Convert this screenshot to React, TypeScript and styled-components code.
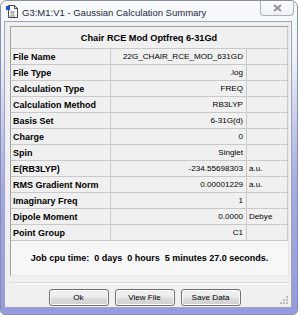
import { Fragment } from 'react'
import styled, { createGlobalStyle } from 'styled-components'

const GlobalStyle = createGlobalStyle`
  html, body {
    margin: 0;
    padding: 0;
    background: #ffffff;
  }
  body {
    font-family: 'Liberation Sans', Arial, sans-serif;
    color: #000;
  }
`

const Window = styled.div`
  position: relative;
  box-sizing: border-box;
  width: 298px;
  height: 315px;
  display: flex;
  flex-direction: column;
  border: 1px solid #8a8fa8;
  border-radius: 7px 7px 5px 5px;
  background: linear-gradient(
    180deg,
    #f9fbfd 0%,
    #eef2f8 18%,
    #c4c8ee 40%,
    #a4a9e6 60%,
    #959be0 100%
  );
  overflow: hidden;
`

const TitleBar = styled.div`
  height: 20px;
  display: flex;
  align-items: flex-start;
  padding-left: 5px;
  flex-shrink: 0;
`

const TitleIcon = styled.svg`
  width: 12px;
  height: 13px;
  margin-top: 4px;
  flex-shrink: 0;
`

const TitleText = styled.span`
  font-family: 'Liberation Sans', Arial, sans-serif;
  font-size: 9.5px;
  color: #1e2a3a;
  margin-left: 4px;
  margin-top: 6px;
  white-space: nowrap;
`

const CloseButton = styled.div`
  margin-left: auto;
  margin-right: 3px;
  margin-top: -1px;
  width: 34px;
  height: 16px;
  box-sizing: border-box;
  border: 1px solid #a9b0bf;
  border-top: none;
  border-radius: 0 0 4px 4px;
  background: linear-gradient(180deg, #fdfdfe 0%, #eef1f5 100%);
  display: flex;
  align-items: center;
  justify-content: center;
`

const Client = styled.div`
  position: relative;
  flex: 1;
  margin: 0 5px 6px 3px;
  box-sizing: border-box;
  border: 1px solid #9ea3b8;
  background: #f0f0f0;
  padding: 4px 2px 0 5px;
  display: flex;
  flex-direction: column;
`

const Panel = styled.div`
  box-sizing: border-box;
  width: 279px;
  height: 250px;
  border: 1px solid #a0a0a0;
  border-right-color: #e6e6e6;
  border-bottom-color: #e6e6e6;
  background: #f7f7f7;
  display: flex;
  flex-direction: column;
`

const Grid = styled.div`
  display: grid;
  grid-template-columns: 100px 136px 41px;
`

const HeaderCell = styled.div`
  grid-column: 1 / span 3;
  height: 22px;
  box-sizing: border-box;
  border-bottom: 1px solid #c9c9c9;
  border-right: 1px solid #c9c9c9;
  background: #f0f0f0;
  display: flex;
  align-items: center;
  justify-content: center;
  font-size: 9.2px;
  font-weight: 700;
`

const Cell = styled.div<{ $align?: 'left' | 'right'; $bold?: boolean }>`
  height: 16px;
  box-sizing: border-box;
  border-bottom: 1px solid #c9c9c9;
  border-right: 1px solid #c9c9c9;
  background: #f0f0f0;
  display: flex;
  align-items: center;
  justify-content: ${({ $align }) => ($align === 'right' ? 'flex-end' : 'flex-start')};
  padding: 0 3px 0 2px;
  font-size: ${({ $bold }) => ($bold ? '9px' : '8.1px')};
  font-weight: ${({ $bold }) => ($bold ? 700 : 400)};
  white-space: nowrap;
  overflow: hidden;
`

const CpuLine = styled.div`
  flex: 1;
  display: flex;
  align-items: center;
  justify-content: center;
  padding-bottom: 1px;
  font-size: 9px;
  font-weight: 700;
  white-space: pre;
`

const Separator = styled.div`
  width: 280px;
  margin-top: 6px;
  border-top: 1px solid #d5d5d5;
  border-bottom: 1px solid #ffffff;
`

const ButtonRow = styled.div`
  display: flex;
  justify-content: center;
  gap: 6px;
  margin-top: 5px;
  padding-right: 10px;
`

const Button = styled.button`
  width: 60px;
  height: 17px;
  box-sizing: border-box;
  padding: 0;
  border: 1px solid #707070;
  border-radius: 3px;
  background: linear-gradient(180deg, #f2f2f2 0%, #ebebeb 48%, #dddddd 52%, #cfcfcf 100%);
  box-shadow: inset 0 0 0 1px #fcfcfc;
  font-family: 'Liberation Sans', Arial, sans-serif;
  font-size: 8.1px;
  color: #000;
`

const Grip = styled.svg`
  position: absolute;
  right: 2px;
  bottom: 2px;
  width: 10px;
  height: 10px;
`

type Row = { label: string; value: string; unit?: string }

const ROWS: Row[] = [
  { label: 'File Name', value: '22G_CHAIR_RCE_MOD_631GD' },
  { label: 'File Type', value: '.log' },
  { label: 'Calculation Type', value: 'FREQ' },
  { label: 'Calculation Method', value: 'RB3LYP' },
  { label: 'Basis Set', value: '6-31G(d)' },
  { label: 'Charge', value: '0' },
  { label: 'Spin', value: 'Singlet' },
  { label: 'E(RB3LYP)', value: '-234.55698303', unit: 'a.u.' },
  { label: 'RMS Gradient Norm', value: '0.00001229', unit: 'a.u.' },
  { label: 'Imaginary Freq', value: '1' },
  { label: 'Dipole Moment', value: '0.0000', unit: 'Debye' },
  { label: 'Point Group', value: 'C1' },
]

const DocIcon = () => (
  <TitleIcon viewBox="0 0 12 13">
    <path d="M2.5 0.5h6l3 3v9h-9z" fill="#ffffff" stroke="#4a4a4a" />
    <path d="M8.5 0.5v3h3" fill="none" stroke="#4a4a4a" />
    <rect x="0" y="1" width="4" height="4" fill="#1f4fd8" />
    <path d="M4 7h5M5 9h3M4 11h5" stroke="#555" strokeWidth="0.8" />
  </TitleIcon>
)

export default function App() {
  return (
    <>
      <GlobalStyle />
      <Window>
        <TitleBar>
          <DocIcon />
          <TitleText>G3:M1:V1 - Gaussian Calculation Summary</TitleText>
          <CloseButton>
            <svg width="9" height="8" viewBox="0 0 9 8">
              <path d="M1 1l7 6M8 1l-7 6" stroke="#8a8f99" strokeWidth="1.8" />
            </svg>
          </CloseButton>
        </TitleBar>
        <Client>
          <Panel>
            <Grid>
              <HeaderCell>Chair RCE Mod Optfreq 6-31Gd</HeaderCell>
              {ROWS.map((row) => (
                <Fragment key={row.label}>
                  <Cell $bold>{row.label}</Cell>
                  <Cell $align="right">{row.value}</Cell>
                  <Cell>{row.unit ?? ''}</Cell>
                </Fragment>
              ))}
            </Grid>
            <CpuLine>{'Job cpu time:  0 days  0 hours  5 minutes 27.0 seconds.'}</CpuLine>
          </Panel>
          <Separator />
          <ButtonRow>
            <Button>Ok</Button>
            <Button>View File</Button>
            <Button>Save Data</Button>
          </ButtonRow>
          <Grip viewBox="0 0 10 10">
            <rect x="7" y="7" width="2" height="2" fill="#bcbcbc" />
            <rect x="4" y="7" width="2" height="2" fill="#bcbcbc" />
            <rect x="7" y="4" width="2" height="2" fill="#bcbcbc" />
            <rect x="1" y="7" width="2" height="2" fill="#bcbcbc" />
            <rect x="4" y="4" width="2" height="2" fill="#bcbcbc" />
            <rect x="7" y="1" width="2" height="2" fill="#bcbcbc" />
          </Grip>
        </Client>
      </Window>
    </>
  )
}
